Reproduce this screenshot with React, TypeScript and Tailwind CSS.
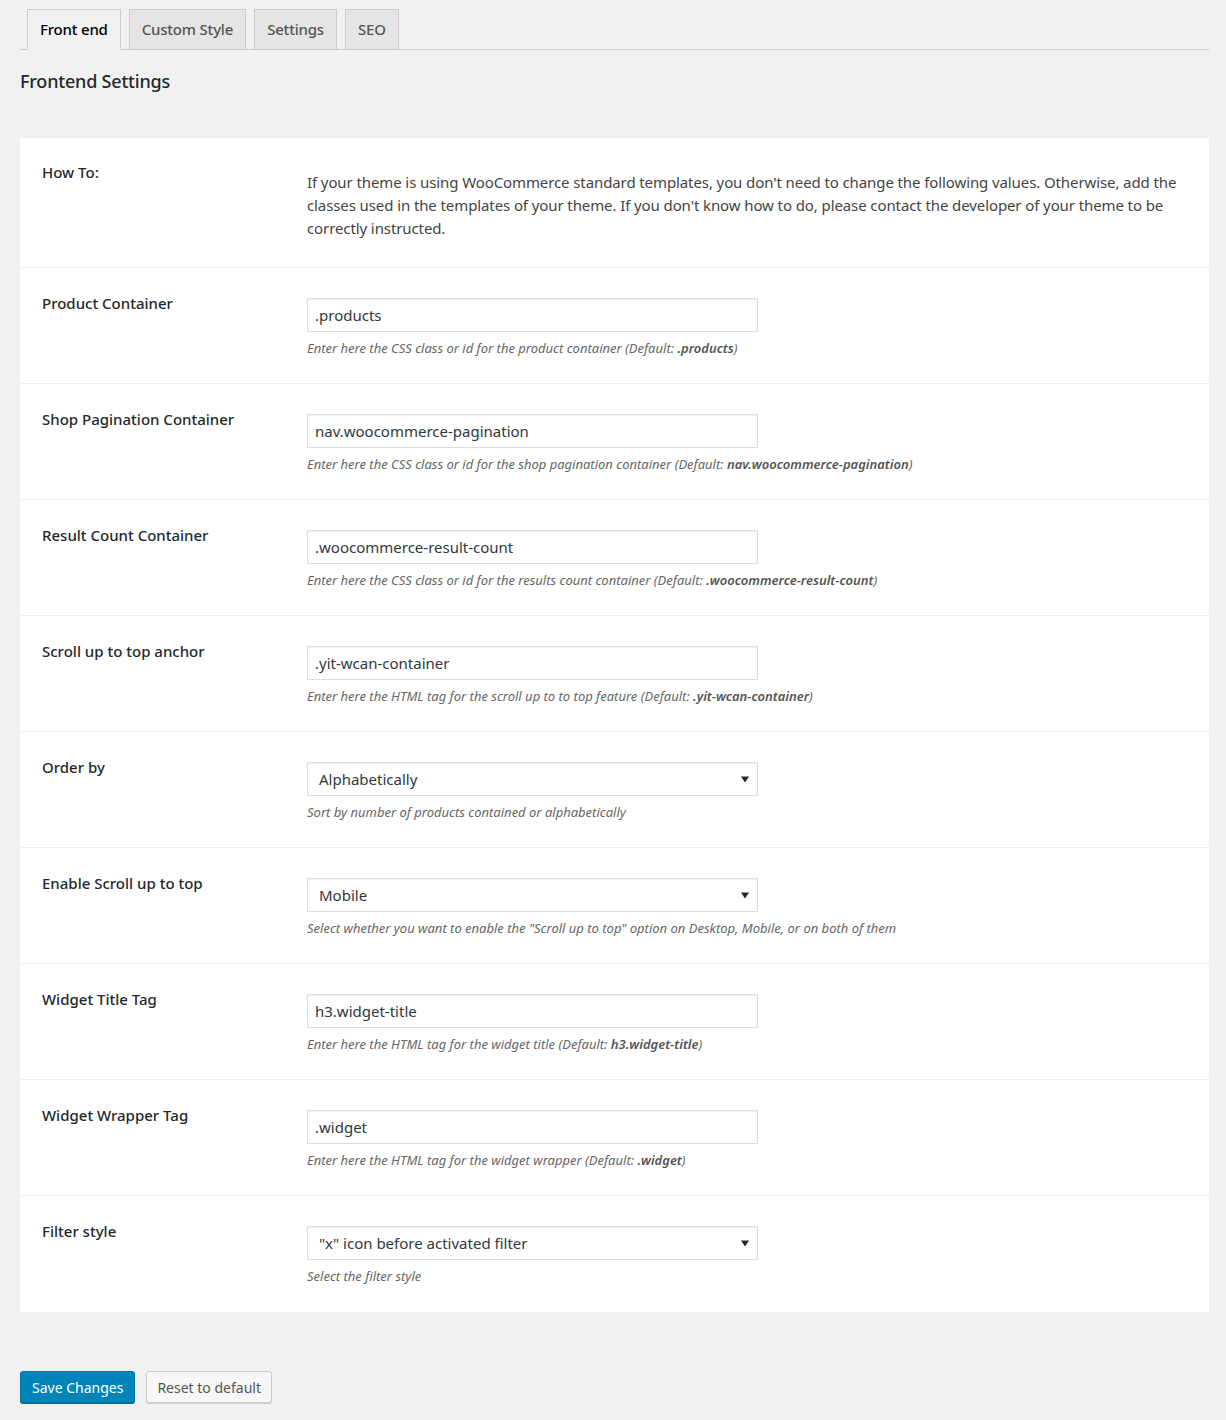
import React from 'react';

const font = { fontFamily: '"Noto Sans", "Open Sans", sans-serif' };

type Row = {
  label: string;
  kind: 'input' | 'select';
  value: string;
  desc: React.ReactNode;
};

const rows: Row[] = [
  {
    label: 'Product Container',
    kind: 'input',
    value: '.products',
    desc: <>Enter here the CSS class or id for the product container (Default: <b>.products</b>)</>,
  },
  {
    label: 'Shop Pagination Container',
    kind: 'input',
    value: 'nav.woocommerce-pagination',
    desc: <>Enter here the CSS class or id for the shop pagination container (Default: <b>nav.woocommerce-pagination</b>)</>,
  },
  {
    label: 'Result Count Container',
    kind: 'input',
    value: '.woocommerce-result-count',
    desc: <>Enter here the CSS class or id for the results count container (Default: <b>.woocommerce-result-count</b>)</>,
  },
  {
    label: 'Scroll up to top anchor',
    kind: 'input',
    value: '.yit-wcan-container',
    desc: <>Enter here the HTML tag for the scroll up to to top feature (Default: <b>.yit-wcan-container</b>)</>,
  },
  {
    label: 'Order by',
    kind: 'select',
    value: 'Alphabetically',
    desc: 'Sort by number of products contained or alphabetically',
  },
  {
    label: 'Enable Scroll up to top',
    kind: 'select',
    value: 'Mobile',
    desc: 'Select whether you want to enable the "Scroll up to top" option on Desktop, Mobile, or on both of them',
  },
  {
    label: 'Widget Title Tag',
    kind: 'input',
    value: 'h3.widget-title',
    desc: <>Enter here the HTML tag for the widget title (Default: <b>h3.widget-title</b>)</>,
  },
  {
    label: 'Widget Wrapper Tag',
    kind: 'input',
    value: '.widget',
    desc: <>Enter here the HTML tag for the widget wrapper (Default: <b>.widget</b>)</>,
  },
  {
    label: 'Filter style',
    kind: 'select',
    value: '"x" icon before activated filter',
    desc: 'Select the filter style',
  },
];

const tabs = ['Front end', 'Custom Style', 'Settings', 'SEO'];

const App = () => {
  return (
    <div className="min-h-[1420px] bg-[#f1f1f1] pl-[20px] pr-[17px] pt-[9px] text-[#444]" style={font}>
      {/* Tabs */}
      <div className="flex gap-[8px] border-b border-[#ccc] pl-[7px]">
        {tabs.map((tab, i) => (
          <div
            key={tab}
            className={
              i === 0
                ? '-mb-px flex h-[41px] items-center border border-b-[#f1f1f1] border-[#ccc] bg-[#f1f1f1] px-[12px] text-[15px] font-medium tracking-[-0.2px] text-black'
                : 'flex h-[40px] items-center border border-b-0 border-[#ccc] bg-[#e5e5e5] px-[12px] text-[15px] font-medium tracking-[-0.2px] text-[#555]'
            }
          >
            {tab}
          </div>
        ))}
      </div>

      <h2 className="mt-[18px] text-[18px] font-medium leading-[26px] tracking-[-0.2px] text-[#23282d]">Frontend Settings</h2>

      {/* Settings table */}
      <div className="mt-[44px] bg-white">
        <div className="flex h-[130px] border-b border-[#eee]">
          <div className="w-[287px] shrink-0 pl-[22px] pt-[23px] text-[15px] font-medium leading-[22px] text-[#23282d]">
            How To:
          </div>
          <p className="pr-[30px] pt-[33px] text-[15px] leading-[23px] tracking-[-0.1px] text-[#444]">
            If your theme is using WooCommerce standard templates, you don't need to change the following values. Otherwise, add the classes used in the templates of your theme. If you don't know how to do, please contact the developer of your theme to be correctly instructed.
          </p>
        </div>

        {rows.map((row, i) => (
          <div
            key={row.label}
            className={
              i === rows.length - 1 ? 'flex h-[116px]' : 'flex h-[116px] border-b border-[#eee]'
            }
          >
            <div className="w-[287px] shrink-0 pl-[22px] pt-[24px] text-[15px] font-medium leading-[22px] text-[#23282d]">
              {row.label}
            </div>
            <div className="pt-[30px]">
              {row.kind === 'input' ? (
                <div className="flex h-[34px] w-[451px] items-center border border-[#ddd] bg-white pl-[7px] text-[15px] text-[#32373c] shadow-[inset_0_1px_2px_rgba(0,0,0,0.07)]">
                  {row.value}
                </div>
              ) : (
                <div className="flex h-[34px] w-[451px] items-center justify-between border border-[#ddd] bg-white pl-[11px] pr-[8px] text-[15px] text-[#32373c] shadow-[inset_0_1px_2px_rgba(0,0,0,0.07)]">
                  <span>{row.value}</span>
                  <svg width="8" height="8" viewBox="0 0 8 8">
                    <path d="M0 1.5h8L4 7.5z" fill="#23282d" />
                  </svg>
                </div>
              )}
              <p className="mt-[7px] text-[13px] italic leading-[18px] text-[#666] [&_b]:font-semibold [&_b]:text-[#555]">
                {row.desc}
              </p>
            </div>
          </div>
        ))}
      </div>

      {/* Buttons */}
      <div className="mt-[59px] flex gap-[11px]">
        <button className="h-[32px] rounded-[3px] border border-[#0073aa] bg-[#0085ba] px-[11px] text-[14px] text-white shadow-[0_1px_0_#006799]">
          Save Changes
        </button>
        <button className="h-[32px] rounded-[3px] border border-[#ccc] bg-[#f7f7f7] px-[10px] text-[14px] text-[#555] shadow-[0_1px_0_#ccc]">
          Reset to default
        </button>
      </div>
    </div>
  );
};

export default App;
